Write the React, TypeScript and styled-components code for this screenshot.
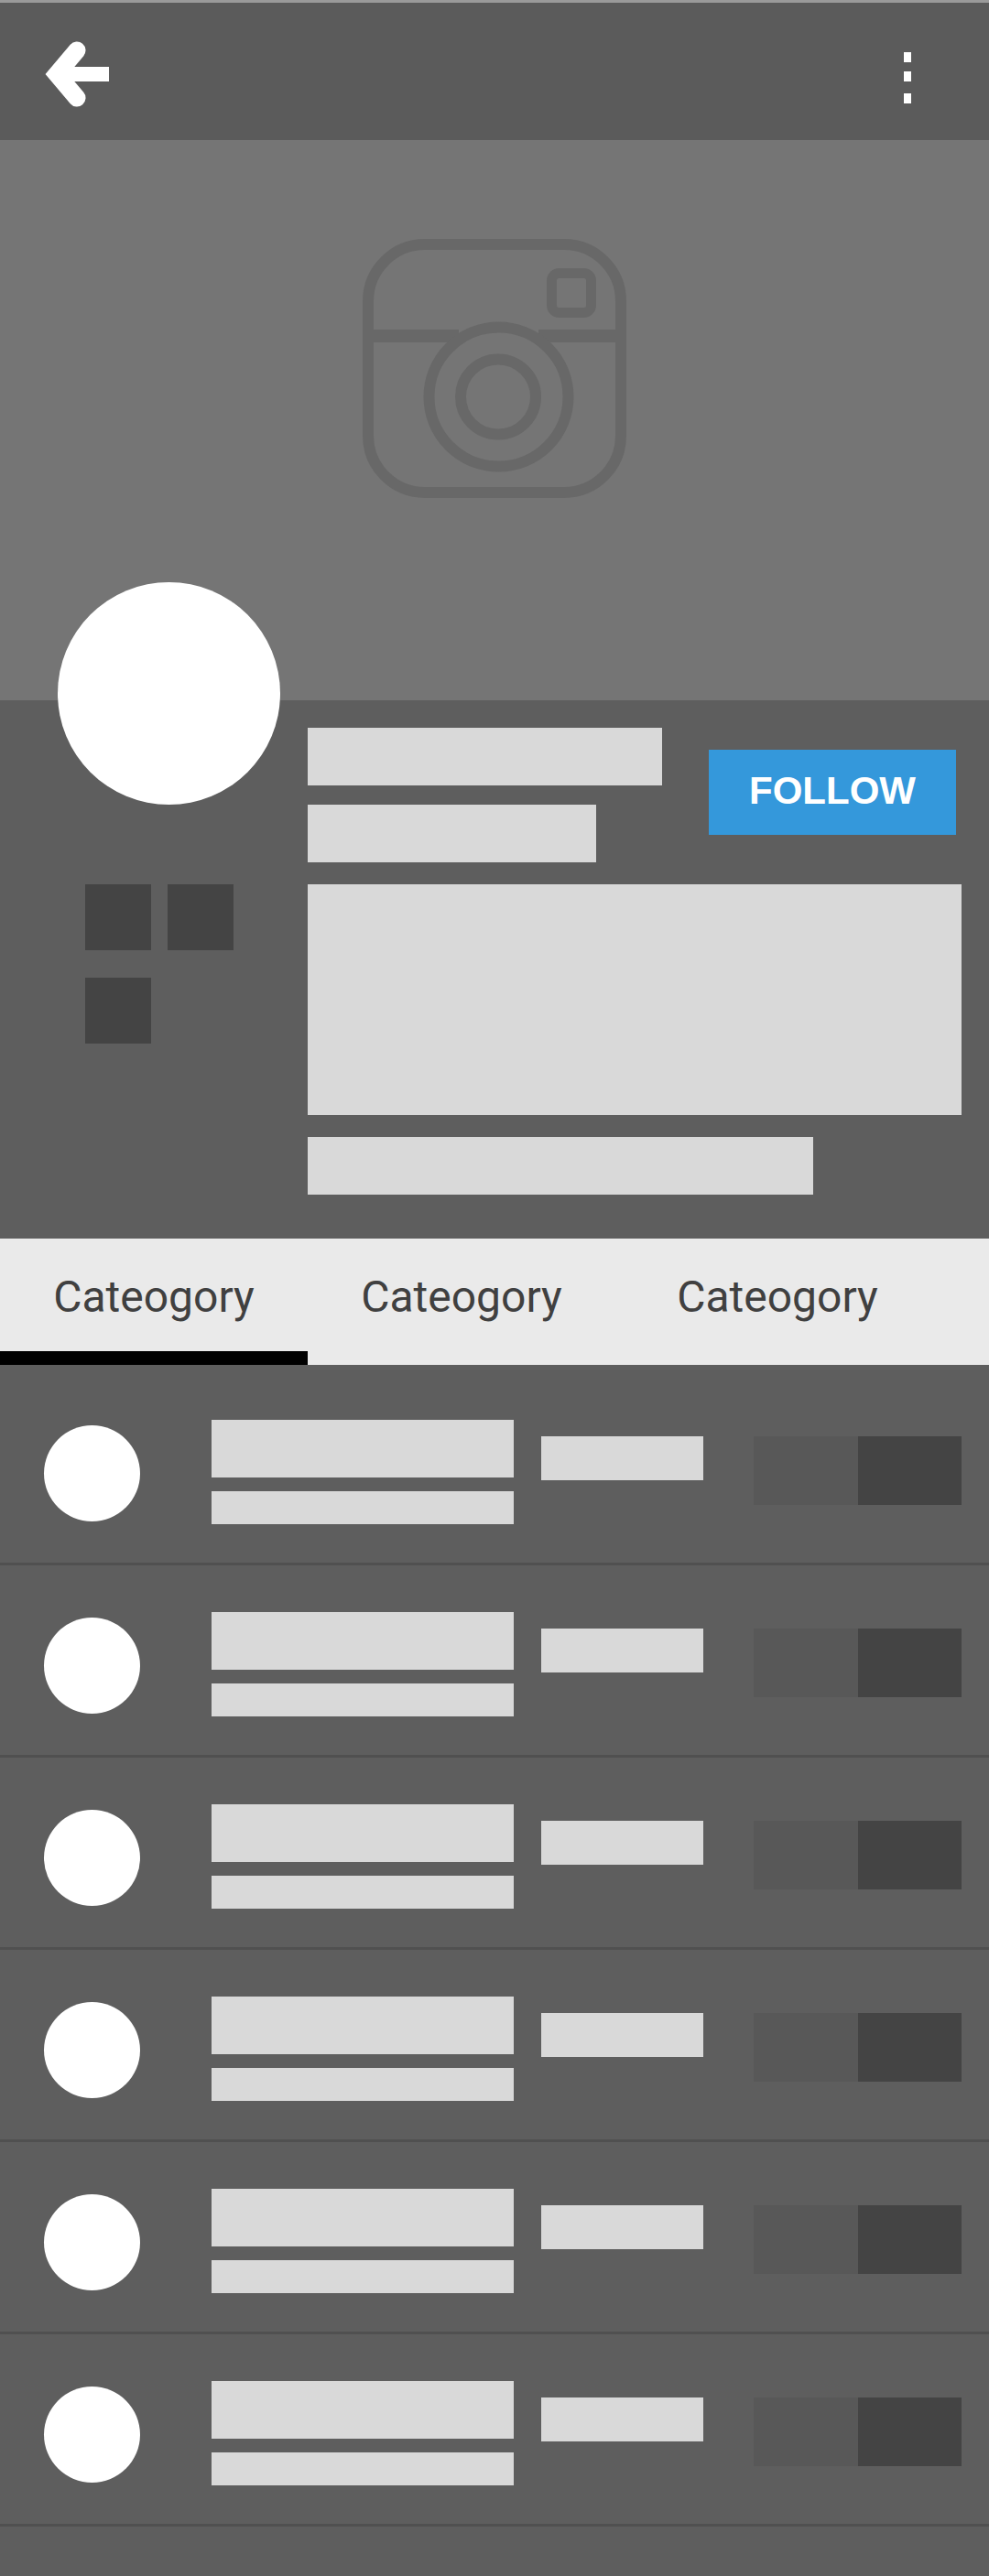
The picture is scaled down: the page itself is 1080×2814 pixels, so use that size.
import React from 'react'
import styled, { createGlobalStyle } from 'styled-components'

const GlobalStyle = createGlobalStyle`
  html, body {
    margin: 0;
    padding: 0;
    background: #5e5e5e;
  }
  * {
    box-sizing: border-box;
  }
`

const Page = styled.div`
  width: 1080px;
  min-height: 2814px;
  background: #5e5e5e;
  overflow: hidden;
`

const Header = styled.header`
  display: flex;
  justify-content: space-between;
  align-items: flex-start;
  height: 153px;
  padding: 0 84px 0 48px;
  background: #5b5b5b;
  border-top: 3px solid #9a9a9a;
`

const BackIcon = styled.svg`
  display: block;
  margin-top: 42px;
`

const MenuIcon = styled.svg`
  display: block;
  margin-top: 54px;
`

const Hero = styled.div`
  display: flex;
  justify-content: center;
  height: 612px;
  padding-top: 108px;
  background: #757575;
`

const Profile = styled.section`
  display: flex;
  height: 588px;
`

const SideColumn = styled.div`
  width: 336px;
  padding-left: 63px;
`

const Avatar = styled.div`
  position: relative;
  width: 243px;
  height: 243px;
  margin-top: -129px;
  border-radius: 50%;
  background: #fff;
`

const BadgeGrid = styled.div`
  display: grid;
  grid-template-columns: 72px 72px;
  grid-auto-rows: 72px;
  column-gap: 18px;
  row-gap: 30px;
  margin: 87px 0 0 30px;
`

const Badge = styled.div`
  background: #444;
`

const InfoColumn = styled.div`
  display: flex;
  flex-direction: column;
  width: 714px;
  padding-top: 30px;
`

const TopRow = styled.div`
  display: flex;
  align-items: flex-start;
  justify-content: space-between;
  margin-bottom: 24px;
`

const NameLines = styled.div`
  display: flex;
  flex-direction: column;
  gap: 21px;
`

const Block = styled.div<{ $w: number; $h: number }>`
  width: ${(p) => p.$w}px;
  height: ${(p) => p.$h}px;
  background: #d9d9d9;
`

const InfoStack = styled.div`
  display: flex;
  flex-direction: column;
  gap: 24px;
`

const FollowButton = styled.button`
  width: 270px;
  height: 93px;
  margin: 24px 6px 0 0;
  padding: 0 0 3px;
  border: none;
  background: #3498db;
  color: #fff;
  font-family: 'Liberation Sans', Arial, sans-serif;
  font-size: 42px;
  font-weight: 700;
`

const Tabs = styled.nav`
  display: flex;
  height: 138px;
  background: #eaeaea;
`

const Tab = styled.div<{ $active?: boolean; $shift?: number }>`
  width: 336px;
  height: 138px;
  margin-left: ${(p) => p.$shift || 0}px;
  padding-top: 36px;
  border-bottom: 15px solid ${(p) => (p.$active ? '#000' : 'transparent')};
  color: #404040;
  font-family: Roboto, sans-serif;
  font-size: 48px;
  line-height: 56px;
  text-align: center;
`

const List = styled.div`
  margin-top: 9px;
`

const Row = styled.div`
  display: flex;
  align-items: flex-start;
  height: 210px;
  padding: 51px 30px 0 48px;
  border-bottom: 3px solid #505050;
`

const RowAvatar = styled.div`
  flex: none;
  width: 105px;
  height: 105px;
  margin-top: 6px;
  border-radius: 50%;
  background: #fff;
`

const RowText = styled.div`
  display: flex;
  flex-direction: column;
  gap: 15px;
  margin: 0 30px 0 78px;
`

const RowMeta = styled(Block)`
  margin-top: 18px;
`

const Toggle = styled.div`
  display: flex;
  width: 227px;
  height: 75px;
  margin: 18px 0 0 55px;
`

const ToggleSide = styled.div<{ $on?: boolean }>`
  flex: 1;
  background: ${(p) => (p.$on ? '#444' : '#585858')};
`

const iconColor = '#686868'

const rows = [0, 1, 2, 3, 4, 5]

const App = () => {
  return (
    <Page>
      <GlobalStyle />
      <Header>
        <BackIcon width="72" height="74" viewBox="0 0 72 74">
          <path
            d="M36 10 L14 36 L36 62"
            fill="none"
            stroke="#fff"
            strokeWidth="19"
            strokeLinecap="round"
            strokeLinejoin="miter"
          />
          <rect x="20" y="28" width="51" height="16" fill="#fff" />
        </BackIcon>
        <MenuIcon width="9" height="57" viewBox="0 0 9 57">
          <rect x="0" y="0" width="8" height="11" fill="#fff" />
          <rect x="0" y="21" width="8" height="11" fill="#fff" />
          <rect x="0" y="45" width="8" height="11" fill="#fff" />
        </MenuIcon>
      </Header>
      <Hero>
        <svg width="288" height="283" viewBox="0 0 288 283" fill="none" stroke={iconColor}>
          <rect x="6" y="6" width="276" height="271" rx="62" strokeWidth="12" />
          <path d="M6 106 H105 M192 106 H282" strokeWidth="14" />
          <circle cx="148.5" cy="172.5" r="76" strokeWidth="12" />
          <circle cx="148" cy="172.5" r="41" strokeWidth="12" />
          <rect x="206.5" y="37.5" width="43" height="43" rx="8" strokeWidth="11" />
        </svg>
      </Hero>
      <Profile>
        <SideColumn>
          <Avatar />
          <BadgeGrid>
            <Badge />
            <Badge />
            <Badge />
          </BadgeGrid>
        </SideColumn>
        <InfoColumn>
          <TopRow>
            <NameLines>
              <Block $w={387} $h={63} />
              <Block $w={315} $h={63} />
            </NameLines>
            <FollowButton>FOLLOW</FollowButton>
          </TopRow>
          <InfoStack>
            <Block $w={714} $h={252} />
            <Block $w={552} $h={63} />
          </InfoStack>
        </InfoColumn>
      </Profile>
      <Tabs>
        <Tab $active>Cateogory</Tab>
        <Tab>Cateogory</Tab>
        <Tab $shift={9}>Cateogory</Tab>
      </Tabs>
      <List>
        {rows.map((row) => (
          <Row key={row}>
            <RowAvatar />
            <RowText>
              <Block $w={330} $h={63} />
              <Block $w={330} $h={36} />
            </RowText>
            <RowMeta $w={177} $h={48} />
            <Toggle>
              <ToggleSide />
              <ToggleSide $on />
            </Toggle>
          </Row>
        ))}
      </List>
    </Page>
  )
}

export default App
